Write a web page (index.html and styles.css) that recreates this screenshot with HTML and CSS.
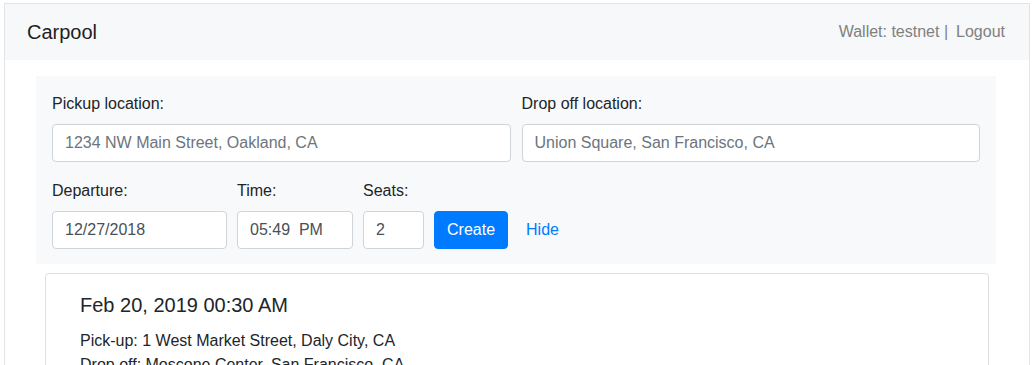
FILE: index.html
```html
<!DOCTYPE html>
<html lang="en">
<head>
    <meta charset="UTF-8">
    <meta name="viewport" content="width=device-width, initial-scale=1.0">
    <title>Carpool</title>
    <link rel="stylesheet" href="styles.css">
</head>
<body>
    <div class="app">
        <nav class="topbar">
            <span class="brand">Carpool</span>
            <span class="account">Wallet: testnet |<a class="logout" href="#">Logout</a></span>
        </nav>

        <form class="panel">
            <div class="row">
                <div class="field grow">
                    <label>Pickup location:</label>
                    <input type="text" placeholder="1234 NW Main Street, Oakland, CA">
                </div>
                <div class="field grow">
                    <label>Drop off location:</label>
                    <input type="text" placeholder="Union Square, San Francisco, CA">
                </div>
            </div>
            <div class="row last">
                <div class="field date">
                    <label>Departure:</label>
                    <input type="text" value="12/27/2018">
                </div>
                <div class="field time">
                    <label>Time:</label>
                    <input type="text" value="05:49  PM">
                </div>
                <div class="field seats">
                    <label>Seats:</label>
                    <input type="text" value="2">
                </div>
                <div class="actions">
                    <button type="button" class="btn-create">Create</button>
                    <a class="btn-hide" href="#">Hide</a>
                </div>
            </div>
        </form>

        <div class="ride">
            <h5 class="ride-date">Feb 20, 2019 00:30 AM</h5>
            <p>Pick-up: 1 West Market Street, Daly City, CA</p>
            <p>Drop off: Moscone Center, San Francisco, CA</p>
        </div>
    </div>
</body>
</html>
```

FILE: styles.css
```css
html {
    overflow: hidden;
}

body {
    margin: 0;
    font-family: "Liberation Sans", Arial, sans-serif;
    font-size: 16px;
    line-height: 1.5;
    color: #212529;
    background: white;
}

.app {
    margin: 3px 4px 0 4px;
    border: 1px solid #e4e4e4;
    min-height: 100vh;
}

.topbar {
    display: flex;
    justify-content: space-between;
    align-items: center;
    height: 56px;
    padding: 0 24px 0 22px;
    background: #f7f8f9;
}

.brand {
    font-size: 20px;
    color: #1e1e1e;
}

.account {
    color: #808080;
}

.logout {
    color: #808080;
    text-decoration: none;
    margin-left: 8px;
}

.panel {
    width: 928px;
    margin: 16px 0 0 31px;
    padding: 16px 16px 15px;
    background: #f8f9fa;
}

.row {
    display: flex;
    gap: 11px;
    margin-bottom: 17px;
}

.row.last {
    gap: 10px;
    margin-bottom: 0;
}

.field {
    display: flex;
    flex-direction: column;
}

.field.grow { flex: 1; }
.field.date { width: 175px; }
.field.time { width: 116px; }
.field.seats { width: 61px; }

label {
    margin-bottom: 8px;
}

input {
    box-sizing: border-box;
    height: 38px;
    width: 100%;
    padding: 6px 12px;
    font-family: inherit;
    font-size: 16px;
    color: #495057;
    background: white;
    border: 1px solid #ced4da;
    border-radius: 4px;
    white-space: pre;
}

input::placeholder {
    color: #6c757d;
}

.actions {
    display: flex;
    align-items: center;
    align-self: flex-end;
}

.btn-create {
    height: 38px;
    padding: 6px 12px;
    font-family: inherit;
    font-size: 16px;
    color: white;
    background: #007bff;
    border: 1px solid #007bff;
    border-radius: 4px;
}

.btn-hide {
    padding-left: 18px;
    color: #007bff;
    text-decoration: none;
}

.ride {
    width: 873px;
    margin: 9px 0 0 40px;
    padding: 19px 35px 19px 34px;
    border: 1px solid #dfdfdf;
    border-radius: 4px;
}

.ride-date {
    margin: 0 0 12px;
    font-size: 20px;
    font-weight: 400;
    line-height: 24px;
}

.ride p {
    margin: 0;
}
```
